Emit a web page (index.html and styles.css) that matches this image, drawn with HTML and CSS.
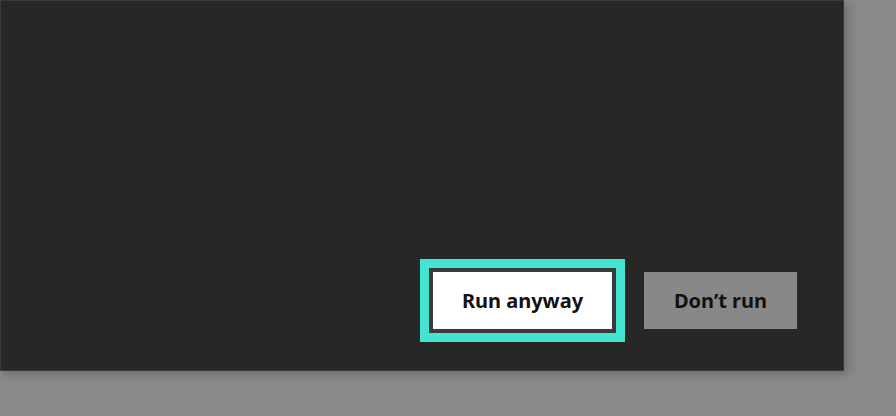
FILE: index.html
```html
<!DOCTYPE html>
<html>
<head>
<meta charset="utf-8">
<link rel="stylesheet" href="styles.css">
</head>
<body>
<div class="dialog">
  <div class="actions">
    <button class="btn btn-primary">Run anyway</button>
    <button class="btn btn-secondary">Don’t run</button>
  </div>
</div>
</body>
</html>
```
FILE: styles.css
```css
html, body {
  margin: 0;
  padding: 0;
}
body {
  width: 896px;
  height: 416px;
  background: #8a8b89;
  overflow: hidden;
  font-family: "Noto Sans", "Open Sans", sans-serif;
}
.dialog {
  box-sizing: border-box;
  width: 844px;
  height: 371px;
  background: #272725;
  border: 1px solid #3b3b39;
  box-shadow: 3px 3px 10px rgba(0, 0, 0, 0.25);
  display: flex;
  flex-direction: column;
  justify-content: flex-end;
}
.actions {
  display: flex;
  justify-content: flex-end;
  align-items: center;
  gap: 28px;
  padding: 0 46px 37px 0;
}
.btn {
  box-sizing: border-box;
  font-family: inherit;
  font-size: 20px;
  font-weight: 700;
  color: #111;
  margin: 0;
  padding: 0;
  cursor: pointer;
}
.btn-primary {
  width: 187px;
  height: 65px;
  background: #ffffff;
  border: 4px solid #3a3a3a;
  box-shadow: 0 0 0 9px #45e3d2;
}
.btn-secondary {
  width: 153px;
  height: 57px;
  background: #878887;
  border: none;
}
```
